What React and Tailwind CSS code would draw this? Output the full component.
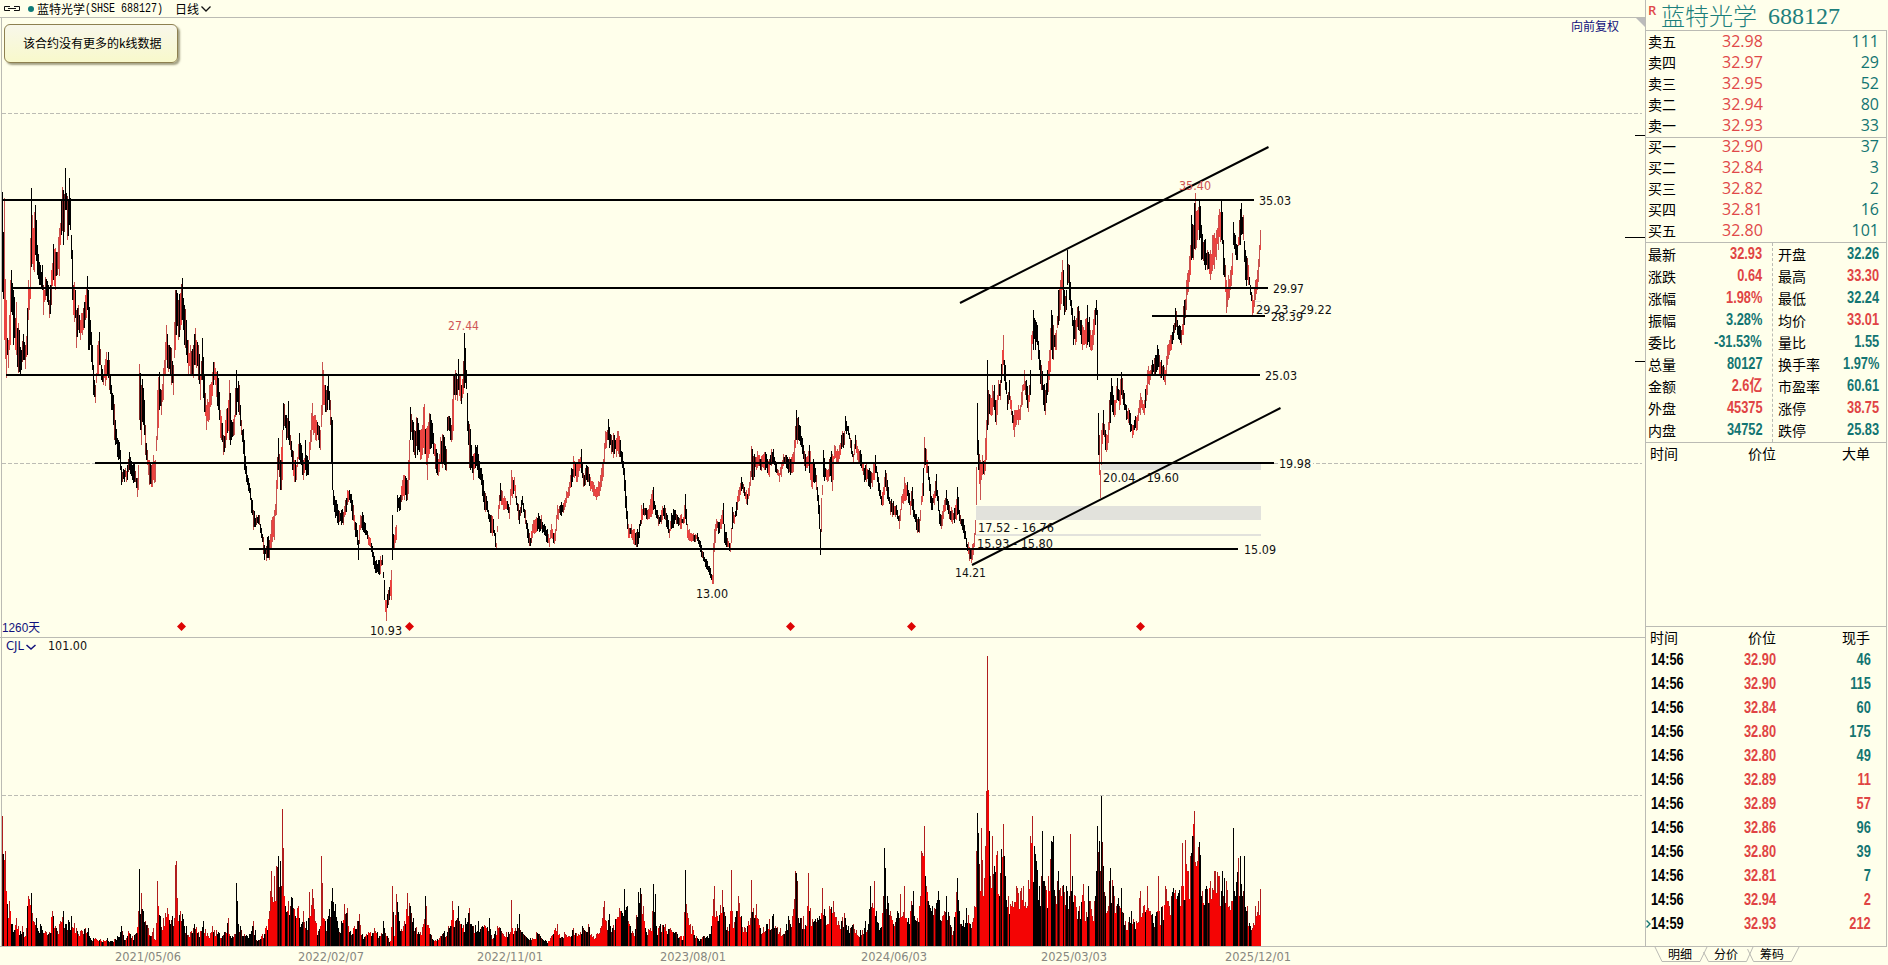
import React, { useState } from 'react';
import clsx from 'clsx';

// x, high, low
const PRICE = `2,192,292 4,198,340 6,300,378 8,340,368 10,280,345 11,270,312 13,290,345 15,318,350 16,302,355 19,330,372
21,350,370 23,334,360 25,345,369 27,308,355 28,280,320 29,288,310 30,238,299 31,188,267 33,228,270 35,205,255 37,245,275
39,262,285 42,265,290 43,285,315 45,277,300 48,285,305 49,300,318 51,270,305 53,244,280 55,248,290 57,252,275 59,228,276
61,200,235 63,190,245 65,168,210 67,196,240 69,178,225 70,198,230 72,250,300 73,285,315 75,290,318 76,310,348 78,305,330
80,320,340 83,308,330 85,295,320 87,276,310 88,290,350 90,320,345 92,345,370 93,365,395 95,385,403 97,345,375 99,332,365
101,365,380 103,375,385 106,352,380 109,360,390 111,385,410 113,395,425 115,420,445 118,440,460 120,450,470 121,466,485
124,470,482 127,465,480 129,452,470 132,465,480 134,462,482 137,478,497 138,465,490 139,364,420 141,385,445 143,388,425
145,425,455 147,450,465 149,460,485 151,465,487 153,455,480 155,460,482 157,390,440 159,372,410 161,390,415 163,368,400
166,325,360 168,345,372 171,348,385 173,365,395 175,290,350 176,290,335 178,300,340 180,293,330 182,278,320 184,305,345
186,320,355 188,340,375 190,345,375 193,345,378 195,328,365 198,345,380 200,375,400 202,338,380 204,375,412 206,405,430
209,385,420 211,382,405 213,362,385 215,368,385 218,378,410 220,410,438 223,435,455 225,420,448 229,380,440 231,420,440
234,415,435 236,370,415 239,385,415 241,420,435 244,440,470 247,475,485 250,488,500 253,510,530 256,515,525 259,515,525
261,528,538 264,545,560 267,537,558 269,540,560 271,520,550 274,510,540 276,480,515 278,438,470 280,460,490 282,430,480
283,403,430 286,415,440 288,401,440 290,435,450 292,450,470 294,460,482 296,465,480 299,433,460 301,445,465 303,460,480
305,440,470 308,460,475 310,430,450 312,403,430 315,415,440 318,425,440 320,430,450 322,362,415 324,385,405 326,390,412
328,376,400 330,400,425 332,420,490 333,490,505 335,500,518 338,510,525 341,510,525 343,512,525 345,500,515 347,490,505
349,490,500 352,500,520 354,515,530 357,530,545 358,540,560 360,515,530 362,512,530 365,523,535 368,535,545 370,538,547
373,552,565 376,560,573 379,560,575 382,555,565 384,580,600 385,600,612 386,600,621 388,590,605 389,587,600 391,570,600
392,515,560 394,535,550 396,525,540 397,495,512 400,495,510 402,480,500 404,475,500 407,480,500 409,440,480 410,407,440
412,420,440 414,430,455 417,418,455 420,430,460 422,425,455 424,404,454 427,426,480 430,414,449 433,433,454 436,449,473
438,459,476 440,437,463 443,435,463 446,449,471 447,417,431 449,416,431 451,425,442 453,375,431 454,375,395 455,370,400
457,379,401 458,359,390 460,375,401 462,379,398 464,333,388 466,370,389 467,393,431 468,421,445 469,424,468 471,445,468
473,454,480 475,445,468 477,445,470 479,461,479 481,468,485 484,491,510 486,496,510 488,510,519 490,515,533 493,519,533
495,533,547 496,543,549 498,505,519 500,483,501 502,491,505 504,496,510 507,501,510 509,507,519 511,470,496 514,477,491
516,496,505 519,510,524 522,496,505 525,510,524 528,529,543 530,538,546 532,524,538 535,519,533 538,513,529 541,515,529
544,524,535 547,529,543 549,538,547 551,524,538 553,533,543 555,529,541 557,505,519 560,505,515 563,503,513 566,491,503
569,482,496 571,468,487 573,456,477 576,463,482 578,459,477 581,449,473 583,473,487 585,468,485 587,466,482 590,477,491
593,482,496 596,487,500 599,482,496 601,468,487 603,459,477 605,431,449 608,419,440 611,435,454 614,435,454 616,438,457
618,431,454 620,440,457 622,452,468 624,468,491 626,496,519 628,524,538 631,524,538 635,533,545 637,529,547 639,524,538
641,505,524 643,503,515 646,508,519 649,505,519 653,487,510 655,505,515 658,515,526 661,510,524 664,505,519 667,515,529
669,529,538 671,513,529 674,510,524 677,515,524 680,515,529 683,517,524 685,494,519 687,524,538 690,533,541 693,533,541
697,533,541 700,541,552 703,552,561 706,559,569 709,566,575 712,575,584 713,543,584 714,529,552 716,519,531 719,522,533
721,515,529 723,503,524 724,524,543 727,538,547 730,543,552 732,507,529 734,515,524 737,496,510 739,487,501 741,477,491
744,487,496 747,494,505 749,482,496 751,446,477 754,454,477 757,451,468 760,459,470 763,454,468 766,454,468 769,459,477
771,449,466 773,449,463 776,463,473 779,473,482 781,463,477 783,454,466 786,455,468 788,459,473 790,459,475 792,454,473
794,440,463 796,410,440 798,417,440 800,426,445 803,445,459 805,454,471 807,456,468 809,445,473 811,463,487 813,459,482
815,468,482 817,487,501 819,505,529 820,529,555 823,450,477 825,468,477 827,470,482 829,459,477 832,454,491 834,445,459
837,449,463 839,445,459 841,435,449 844,431,445 845,416,431 848,426,435 851,440,454 853,454,463 855,435,449 858,449,463
861,454,468 864,468,482 866,463,482 869,468,487 872,473,487 875,455,473 878,477,491 881,496,505 883,487,505 885,470,487
888,487,501 890,501,515 893,501,515 896,505,515 899,515,529 901,496,510 904,477,501 907,482,496 910,501,515 912,487,510
914,510,519 917,519,533 919,519,533 921,496,505 923,468,496 924,437,468 926,449,473 929,477,491 931,496,510 934,491,505
936,474,496 939,510,524 941,515,529 943,505,519 946,490,505 949,505,519 952,510,524 955,505,519 957,487,515 960,515,524
963,519,533 966,538,547 969,547,561 971,549,563 973,543,555 975,520,535 976,467,505 977,403,455 978,440,470 980,460,500
982,455,475 984,460,475 986,420,460 987,360,430 988,390,425 990,395,415 992,385,415 994,385,410 996,400,425 998,380,400
1000,380,400 1002,350,375 1003,335,365 1005,365,390 1007,395,410 1009,380,400 1011,400,415 1013,415,430 1014,410,437
1016,410,425 1018,405,425 1020,405,420 1022,385,405 1024,370,390 1026,380,400 1028,395,412 1030,370,395 1031,335,360
1033,310,350 1035,320,350 1037,325,345 1039,350,370 1041,365,390 1043,385,405 1045,390,415 1047,370,395 1049,350,380
1051,310,350 1053,325,360 1056,330,350 1058,290,325 1060,280,310 1062,260,290 1064,290,315 1066,290,310 1067,250,285
1069,265,300 1071,300,315 1073,320,345 1075,320,345 1078,306,330 1080,320,335 1082,325,350 1084,330,345 1087,305,345
1090,330,350 1092,330,350 1094,310,335 1096,300,315 1097,310,380 1098,413,455 1099,435,475 1100,470,498 1101,430,465
1103,410,435 1105,430,450 1107,435,450 1109,400,430 1111,378,405 1113,395,415 1115,400,415 1117,378,400 1119,390,410
1121,372,395 1123,390,405 1126,405,420 1129,410,425 1132,425,438 1134,420,430 1137,415,430 1140,393,415 1142,400,410
1144,400,415 1147,370,395 1150,370,380 1152,360,375 1154,358,375 1157,345,370 1159,355,375 1161,360,378 1163,365,380
1165,370,385 1167,345,365 1169,340,355 1171,335,350 1173,325,340 1175,308,330 1177,320,335 1179,325,340 1181,330,345
1184,300,325 1186,280,310 1188,270,292 1190,245,275 1191,215,260 1193,225,260 1195,193,250 1197,210,240 1199,201,240
1201,225,260 1204,240,265 1207,250,270 1210,250,280 1213,235,265 1216,230,260 1218,215,250 1220,212,242 1221,200,240
1222,212,244 1223,240,275 1226,280,313 1228,275,300 1230,270,290 1232,253,275 1233,222,245 1235,235,255 1237,245,260
1239,220,245 1241,203,235 1243,215,240 1245,250,280 1248,265,285 1250,285,295 1252,295,315 1253,300,313 1255,280,300
1257,270,290 1259,245,267 1260,230,250`;

// x, bar height
const VOLUME = `2,130 3,92 4,86 5,95 6,55 7,42 9,45 10,35 12,22 14,16 16,28 18,20 20,15 22,20 25,10 27,40 28,50 31,53 33,25
36,28 40,22 45,15 49,14 52,35 56,18 60,25 63,35 66,22 71,30 76,18 80,15 85,18 88,18 90,8 95,8 100,7 107,8 112,5 117,10
121,20 124,6 128,15 132,10 135,12 138,35 139,77 140,32 141,53 143,35 145,25 148,18 150,10 153,18 155,6 157,65 158,40
160,30 163,28 167,38 170,22 172,30 174,28 175,81 176,85 177,48 180,35 182,32 186,20 190,14 194,22 200,15 203,25 208,10
212,20 216,16 222,10 228,28 230,10 235,12 236,63 237,45 238,22 240,20 244,12 250,12 253,25 257,5 262,12 266,20 269,35
271,75 274,70 276,80 278,90 280,85 281,60 282,137 283,98 284,50 285,40 288,45 292,48 295,30 298,40 301,22 303,35 306,25
308,28 309,54 310,30 312,57 315,25 318,15 320,20 321,90 322,63 323,28 325,25 328,30 332,58 335,42 338,18 341,25 344,42
347,38 349,14 353,18 359,32 362,12 368,14 374,18 380,10 383,25 387,10 390,5 392,60 393,34 394,10 396,52 399,25 403,20
407,53 410,40 413,28 418,14 423,22 425,50 426,40 430,12 435,6 440,10 444,15 448,20 452,45 455,25 458,40 462,18 465,28
469,38 473,20 478,25 485,20 489,28 492,7 497,20 500,18 503,12 508,14 510,14 511,46 512,18 514,15 519,32 523,12 530,8
536,14 540,10 546,5 550,8 557,22 560,8 564,14 569,10 573,18 577,10 582,20 588,22 593,10 600,18 604,45 606,25 609,32
612,18 619,38 623,30 624,57 625,36 627,40 630,20 634,10 638,54 640,58 643,40 645,18 650,18 652,35 653,62 655,52 656,20
660,22 665,22 670,18 675,14 680,10 683,10 685,76 686,42 688,28 692,20 697,8 703,10 710,12 714,60 716,35 718,25 722,56
725,30 728,15 730,35 731,76 732,35 733,18 738,50 741,30 745,18 748,25 750,28 751,66 752,34 753,38 756,42 760,18 766,22
773,32 776,18 780,18 784,12 788,30 792,30 795,75 797,65 798,28 800,28 803,30 806,20 808,73 809,35 810,38 814,25 819,30
822,58 825,30 829,40 833,45 838,25 844,33 848,20 853,22 860,16 865,25 868,22 870,60 874,65 876,35 880,18 883,50 884,98
885,78 887,50 890,35 894,20 900,52 902,30 904,60 906,28 908,28 913,55 916,25 919,40 920,50 921,95 923,90 924,120 925,70
926,60 928,45 932,40 938,55 942,30 946,50 949,30 953,15 957,68 959,35 960,22 966,38 970,22 974,40 976,95 977,133 979,82
980,55 981,118 983,50 985,100 986,155 987,290 988,156 989,115 990,70 992,110 994,80 997,95 999,50 1001,97 1003,122
1004,90 1005,70 1008,50 1012,45 1016,60 1020,55 1023,60 1027,40 1030,110 1032,130 1034,100 1036,85 1039,60 1041,70
1042,115 1043,65 1045,60 1048,70 1051,105 1053,110 1055,50 1058,75 1062,60 1066,60 1069,50 1070,112 1071,55 1072,70
1075,50 1079,40 1083,62 1085,25 1088,60 1092,30 1095,50 1097,120 1099,105 1101,150 1102,104 1103,80 1105,50 1107,35
1110,78 1113,60 1116,40 1121,58 1125,25 1131,35 1136,25 1140,55 1143,40 1147,60 1150,35 1155,30 1157,35 1158,70 1159,35
1162,40 1165,60 1169,40 1173,58 1177,50 1181,60 1182,103 1183,60 1185,106 1187,75 1190,90 1192,110 1194,135 1196,80
1199,104 1202,55 1206,60 1210,65 1214,75 1218,70 1222,75 1226,65 1229,40 1232,45 1233,118 1234,55 1235,50 1238,88
1240,90 1243,55 1244,90 1246,35 1247,40 1250,20 1255,40 1258,45 1260,57`;

const FIRST_X = 2;
const LAST_X = 1260;
const BASE = 946;

// tall bars whose direction is known
const UP_DAYS = [2, 175, 176, 282, 283, 321, 924, 985, 986, 987, 1003, 1032, 1070, 1182, 1185, 1194];
const DOWN_DAYS = [139, 685, 884, 977, 1042, 1053, 1097, 1099, 1101, 1192, 1199, 1233, 1244];

const parse = text => text.split(/\s+/).map(p => p.split(',').map(Number));

const makeRandom = seed => () => {
  seed = (seed * 1664525 + 1013904223) % 4294967296;
  return seed / 4294967296;
};

const buildCandles = () => {
  const keys = parse(PRICE);
  const rnd = makeRandom(7);
  const bars = [];
  let k = 0;
  for (let x = FIRST_X; x <= LAST_X; x++) {
    while (k < keys.length - 2 && keys[k + 1][0] <= x) k++;
    const [x0, h0, l0] = keys[k];
    const [x1, h1, l1] = keys[k + 1];
    const t = (x - x0) / (x1 - x0);
    let high = h0 + (h1 - h0) * t;
    let low = l0 + (l1 - l0) * t;
    if (t > 0 && t < 1) {
      const size = low - high;
      high += size * (rnd() * 0.55 - 0.2);
      low -= size * (rnd() * 0.55 - 0.2);
    }
    const slope = (h1 + l1 - h0 - l0) / (x1 - x0);
    const up = rnd() < (slope < -4 ? 0.86 : slope > 4 ? 0.2 : 0.55);
    bars.push({ x, top: Math.round(high), bottom: Math.round(low), up });
  }
  return bars;
};

const buildVolume = candles => {
  const keys = parse(VOLUME);
  const rnd = makeRandom(21);
  let k = 0;
  return candles.map(({ x, up }) => {
    while (k < keys.length - 2 && keys[k + 1][0] <= x) k++;
    const [x0, v0] = keys[k];
    const [x1, v1] = keys[k + 1];
    const t = (x - x0) / (x1 - x0);
    let v = v0 + (v1 - v0) * t;
    if (t > 0 && t < 1) v *= 0.55 + rnd() * 0.5;
    const red = UP_DAYS.includes(x) || (!DOWN_DAYS.includes(x) && (up || rnd() < 0.15));
    return { x, top: Math.round(BASE - v), bottom: BASE, up: red };
  });
};

const overlap = (a, b) => ({
  top: Math.max(a.top, b.top),
  bottom: Math.min(a.bottom, b.bottom),
});

const rect = (x, { top, bottom }) =>
  bottom > top ? `M${x} ${top}h1V${bottom}h-1z` : '';

// up bars get brighter beside other up bars and darker beside down bars
const toPaths = bars => {
  const out = { run: '', lone: '', mixed: '', down: '' };
  const none = { top: 0, bottom: 0, up: false };
  bars.forEach((b, i) => {
    if (!b.up) {
      out.down += rect(b.x, b);
      return;
    }
    const prev = bars[i - 1] || none;
    const next = bars[i + 1] || none;
    out.lone += rect(b.x, b);
    if (prev.up && next.up) out.run += rect(b.x, overlap(overlap(b, prev), next));
    else if (prev.up !== next.up) {
      const red = prev.up ? prev : next;
      const black = prev.up ? next : prev;
      out.run += rect(b.x, overlap(b, red));
      if (b.x % 2) out.mixed += rect(b.x, overlap(b, black));
    } else out.mixed += rect(b.x, overlap(b, prev)) + rect(b.x, overlap(b, next));
  });
  return out;
};

const candles = buildCandles();
const pricePaths = toPaths(candles);
const volumePaths = toPaths(buildVolume(candles));

const levels = [
  [1, 1254, 200],
  [11, 1268, 288],
  [1152, 1265, 316],
  [6, 1260, 375],
  [95, 1274, 463],
  [249, 1238, 549],
];

const chartLabels = [
  [1259, 205, 32, '35.03'],
  [1273, 293, 31, '29.97'],
  [1271, 321, 32, '28.39'],
  [1256, 314, 76, '29.23 - 29.22'],
  [1265, 380, 32, '25.03'],
  [1279, 468, 32, '19.98'],
  [1244, 554, 32, '15.09'],
  [1103, 482, 76, '20.04 - 19.60'],
  [978, 532, 76, '17.52 - 16.76'],
  [977, 548, 76, '15.93 - 15.80'],
  [955, 577, 31, '14.21'],
  [696, 598, 32, '13.00'],
  [370, 635, 32, '10.93'],
];

const diamonds = [181.5, 409.5, 790.5, 911.5, 1140.5];

const dates = [
  [115, '2021/05/06'],
  [298, '2022/02/07'],
  [477, '2022/11/01'],
  [660, '2023/08/01'],
  [861, '2024/06/03'],
  [1041, '2025/03/03'],
  [1225, '2025/12/01'],
];

const asks = [
  ['卖五', '32.98', '111'],
  ['卖四', '32.97', '29'],
  ['卖三', '32.95', '52'],
  ['卖二', '32.94', '80'],
  ['卖一', '32.93', '33'],
];

const bids = [
  ['买一', '32.90', '37'],
  ['买二', '32.84', '3'],
  ['买三', '32.82', '2'],
  ['买四', '32.81', '16'],
  ['买五', '32.80', '101'],
];

const statsLeft = [
  ['最新', '32.93', 1],
  ['涨跌', '0.64', 1],
  ['涨幅', '1.98%', 1],
  ['振幅', '3.28%', 0],
  ['委比', '-31.53%', 0],
  ['总量', '80127', 0],
  ['金额', '2.6亿', 1],
  ['外盘', '45375', 1],
  ['内盘', '34752', 0],
];

const statsRight = [
  ['开盘', '32.26', 0],
  ['最高', '33.30', 1],
  ['最低', '32.24', 0],
  ['均价', '33.01', 1],
  ['量比', '1.55', 0],
  ['换手率', '1.97%', 0],
  ['市盈率', '60.61', 0],
  ['涨停', '38.75', 1],
  ['跌停', '25.83', 0],
];

const trades = [
  ['14:56', '32.90', '46', 0],
  ['14:56', '32.90', '115', 0],
  ['14:56', '32.84', '60', 0],
  ['14:56', '32.80', '175', 0],
  ['14:56', '32.80', '49', 0],
  ['14:56', '32.89', '11', 1],
  ['14:56', '32.89', '57', 1],
  ['14:56', '32.86', '96', 0],
  ['14:56', '32.80', '39', 0],
  ['14:56', '32.81', '7', 0],
  ['14:56', '32.94', '2', 1],
  ['14:59', '32.93', '212', 1],
];

const Tahoma = ({ x, y, width, fill = '#111', children }) => (
  <text
    x={x}
    y={y}
    fill={fill}
    textLength={width}
    lengthAdjust="spacingAndGlyphs"
    className="font-['DejaVu_Sans_Condensed','DejaVu_Sans',sans-serif] text-[13px]"
  >
    {children}
  </text>
);

const Dashes = ({ y }) => (
  <path d={`M2 ${y + 0.5}H1642`} stroke="#bcbcb4" strokeDasharray="4 2" />
);

const Bars = ({ paths, run, lone, mixed }) => (
  <g shapeRendering="crispEdges">
    <path d={paths.down} fill="#000" />
    <path d={paths.lone} fill={lone} />
    <path d={paths.run} fill={run} />
    <path d={paths.mixed} fill={mixed} />
  </g>
);

const Header = () => (
  <div className="h-[17px] shrink-0 flex items-center pl-1 text-[12px] leading-[17px] text-black">
    <svg width="16" height="7" className="shrink-0" fill="none" stroke="#111">
      <path d="M6 1.5H.5v4H6M10 1.5h5.5v4H10M4 3.5h8" />
    </svg>
    <span className="ml-[8px] size-[6px] rounded-full bg-[#0f7b78]" />
    <span className="ml-[3px]">蓝特光学</span>
    <span className="font-['Liberation_Mono',monospace] text-[10px] scale-y-[1.2]">
      (SHSE 688127)
    </span>
    <span className="ml-[12px]">日线</span>
    <svg width="10" height="6" className="ml-[2px]" fill="none" stroke="#111" strokeWidth="1.3">
      <path d="M.5.5 5 5 9.5.5" />
    </svg>
  </div>
);

const PriceChart = () => (
  <svg viewBox="0 18 1645 619" className="block w-[1645px] h-[619px]">
    <Dashes y={113} />
    <Dashes y={463} />
    <g fill="#e2e2dc" shapeRendering="crispEdges">
      <rect x="1101" y="464" width="160" height="6" />
      <rect x="976" y="506" width="285" height="14" />
      <rect x="976" y="534" width="285" height="2" />
      <rect x="1255" y="301" width="6" height="1" />
    </g>
    <Bars paths={pricePaths} run="#ea4440" lone="#c85450" mixed="#7a2422" />
    <g stroke="#000" strokeWidth="2">
      {levels.map(([x1, x2, y]) => (
        <path key={y} d={`M${x1} ${y}H${x2}`} />
      ))}
      <path d="M960 303 1268.500 147M972 565 1280.500 408" />
    </g>
    <rect x="1278" y="457" width="35" height="12" fill="#ffffeb" />
    <Tahoma x={448} y={330} width={31} fill="#cf5555">27.44</Tahoma>
    <Tahoma x={1179} y={190} width={32} fill="#cf5555">35.40</Tahoma>
    {chartLabels.map(([x, y, w, label]) => (
      <Tahoma key={label} x={x} y={y} width={w}>{label}</Tahoma>
    ))}
    {diamonds.map(x => (
      <path key={x} d={`M${x} 622l4.500 4.500-4.500 4.500-4.500-4.500z`} fill="#dd0505" />
    ))}
    <text
      x="2"
      y="632"
      fill="#10107c"
      textLength="38"
      lengthAdjust="spacingAndGlyphs"
      className="font-['Liberation_Sans','Noto_Sans_CJK_SC',sans-serif] text-[12.5px]"
    >
      1260天
    </text>
    <path d="M1636 18h9v9z" fill="#bbb" />
    <path d="M1635 135.500h10M1625 237.500h20M1635 361.500h10" stroke="#000" />
  </svg>
);

const VolumeChart = () => (
  <svg viewBox="0 638 1645 308" className="block w-[1645px] h-[308px]">
    <Dashes y={795} />
    <Bars paths={volumePaths} run="#f40404" lone="#b01e1e" mixed="#5c0606" />
    <Tahoma x={6} y={650} width={18} fill="#10107c">CJL</Tahoma>
    <path d="M26.500 645l4.500 4 4.500-4" fill="none" stroke="#10107c" strokeWidth="1.5" />
    <Tahoma x={48} y={650} width={39}>101.00</Tahoma>
  </svg>
);

const Axis = () => (
  <svg viewBox="0 947 1645 18" className="block w-[1645px] h-[18px]">
    {dates.map(([x, label]) => (
      <Tahoma key={x} x={x} y={961} width={66} fill="#878780">{label}</Tahoma>
    ))}
  </svg>
);

const BookRow = ({ row }) => (
  <div className="h-[21px] flex items-center text-[16px] leading-[21px]">
    <span className="w-[76px] pl-[2px] text-[14px] text-black">{row[0]}</span>
    <span className="w-[60px] font-['Open_Sans',sans-serif] text-[#e04848]">{row[1]}</span>
    <span className="flex-1 pr-[7px] text-right font-['Open_Sans',sans-serif] text-[#137572]">
      {row[2]}
    </span>
  </div>
);

// tall bold figures of the quote tables
const Num = ({ tone, left, children }) => (
  <span
    className={clsx(
      "font-['Liberation_Sans','Noto_Sans_CJK_SC',sans-serif] text-[16px] font-bold scale-x-[0.8] whitespace-nowrap",
      left ? 'origin-left' : 'origin-right',
      tone === 'black' ? 'text-black' : tone ? 'text-[#e04444]' : 'text-[#137572]'
    )}
  >
    {children}
  </span>
);

const StatColumn = ({ rows, className }) => (
  <div className={clsx('flex flex-col', className)}>
    {rows.map(([label, value, up]) => (
      <div key={label} className="h-[22px] flex items-center justify-between leading-none">
        <span className="text-[14px] text-black">{label}</span>
        <Num tone={up}>{value}</Num>
      </div>
    ))}
  </div>
);

const ListHead = ({ last }) => (
  <div className="h-[21px] flex items-center justify-between pl-[4px] pr-[16px] text-[14px] leading-[21px] text-black">
    <span className="w-[98px]">时间</span>
    <span className="flex-1">价位</span>
    <span>{last}</span>
  </div>
);

const Tabs = ({ tab, setTab }) => (
  <div className="relative h-[18px]">
    <svg className="absolute left-0 top-0" width="243" height="18" fill="none" stroke="#bbbbb4">
      <path d="M10 0l7 14.500h38L62 0M58.500 5l5 9.500h38L108 0M102.500 2l6 12.500h38L154 0" />
    </svg>
    <div className="relative flex pl-[23px] gap-[22px] text-[12px] leading-[14px] text-black">
      {['明细', '分价', '筹码'].map(name => (
        <button
          key={name}
          className={clsx('w-[24px] cursor-pointer', tab === name && 'text-black')}
          onClick={() => setTab(name)}
        >
          {name}
        </button>
      ))}
    </div>
  </div>
);

const QuotePanel = () => {
  const [tab, setTab] = useState('明细');

  return (
    <div className="w-[242px] flex flex-col">
      <div className="h-[30px] shrink-0 flex border-l border-[#bbbbb4] text-[#1d807c]">
        <span className="pl-[2px] pt-[4px] w-[15px] font-['Open_Sans',sans-serif] text-[13px] leading-none font-semibold text-[#e04848]">
          R
        </span>
        <span className="text-[24px] font-light leading-[30px]">蓝特光学</span>
        <span className="ml-[11px] font-['Liberation_Serif',serif] text-[24px] leading-[32px]">
          688127
        </span>
      </div>

      <div className="h-[917px] shrink-0 flex flex-col border border-[#bbbbb4]">
        <div className="h-[107px] border-b border-[#bbbbb4]">
          {asks.map(row => (
            <BookRow key={row[0]} row={row} />
          ))}
        </div>
        <div className="h-[105px] border-b border-[#bbbbb4]">
          <div className="-mt-[2px]">
            {bids.map(row => (
              <BookRow key={row[0]} row={row} />
            ))}
          </div>
        </div>
        <div className="h-[200px] flex border-b border-[#bbbbb4]">
          <StatColumn
            rows={statsLeft}
            className="w-[127px] pl-[2px] pr-[10px] border-r border-dashed border-[#bbbbb4]"
          />
          <StatColumn rows={statsRight} className="flex-1 pl-[5px] pr-[7px]" />
        </div>
        <div className="h-[184px] border-b border-[#bbbbb4]">
          <ListHead last="大单" />
        </div>
        <div>
          <ListHead last="现手" />
          {trades.map(([time, price, count, up], i) => (
            <div key={i} className="h-[24px] flex items-center leading-none">
              <span className="w-[5px]">
                {i === trades.length - 1 && (
                  <svg width="5" height="8" fill="none" stroke="#137572" strokeWidth="1.4">
                    <path d="M.5.5 4 4 .5 7.500" />
                  </svg>
                )}
              </span>
              <span className="w-[93px] flex"><Num tone="black" left>{time}</Num></span>
              <span className="w-[60px] flex"><Num tone={1} left>{price}</Num></span>
              <span className="flex-1 flex justify-end pr-[15px]"><Num tone={up}>{count}</Num></span>
            </div>
          ))}
        </div>
      </div>

      <Tabs tab={tab} setTab={setTab} />
    </div>
  );
};

const App = () => {
  return (
    <div className="w-[1888px] h-[965px] flex overflow-hidden bg-[#ffffeb] font-['Noto_Sans_CJK_SC',sans-serif]">
      <div className="relative w-[1645px] shrink-0 flex flex-col">
        <Header />
        <div className="relative flex flex-col border-t border-[#bbbbb4]">
          <PriceChart />
          <div className="h-px bg-[#bbbbb4]" />
          <VolumeChart />
          <div className="h-px bg-[#bbbbb4]" />
          <span className="absolute left-px top-0 h-[929px] w-px bg-[#bbbbb4]" />
          <div className="absolute left-[4px] top-[6px] w-[174px] h-[39px] pl-[18px] pb-[2px] flex items-center rounded-[6px] border border-[#8d8050] bg-gradient-to-b from-[#f8f7ea] to-[#f8f9cb] shadow-[2px_2px_2px_rgba(90,85,50,0.55)] text-[12px] text-black">
            该合约没有更多的k线数据
          </div>
          <span className="absolute left-[1571px] top-0 text-[12px] leading-[16px] text-[#10107c]">
            向前复权
          </span>
        </div>
        <Axis />
      </div>
      <QuotePanel />
    </div>
  );
};

export default App;
